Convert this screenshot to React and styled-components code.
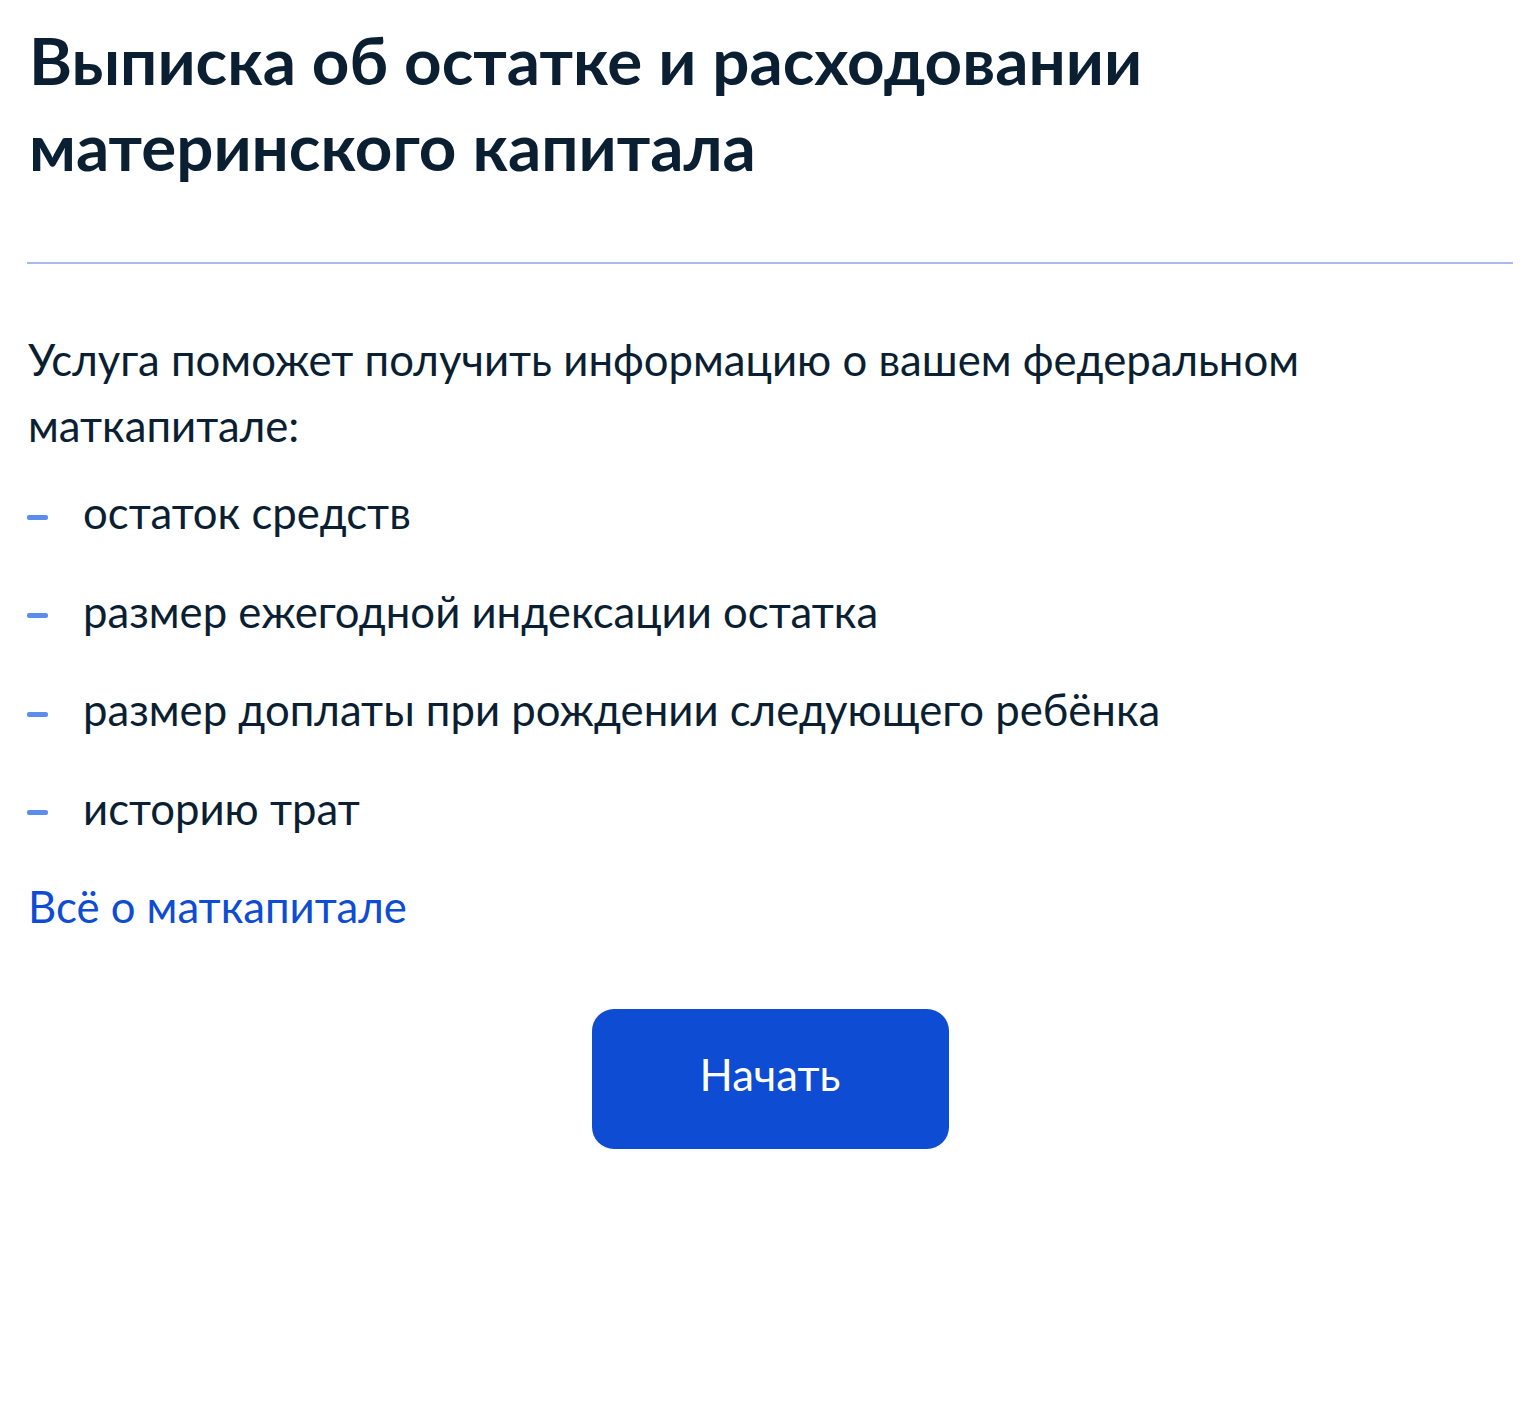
import React from "react";
import styled, { createGlobalStyle } from "styled-components";

const GlobalStyle = createGlobalStyle`
  body {
    margin: 0;
    background: #fff;
    font-family: Lato, "Noto Sans", sans-serif;
    color: #0b1f33;
  }
`;

const Page = styled.main`
  padding: 17px 27px 0 27px;
  display: flex;
  flex-direction: column;
`;

const Title = styled.h1`
  margin: 0 0 0 2px;
  font-size: 65.5px;
  line-height: 86px;
  font-weight: 700;
  color: #0b1f33;
`;

const Divider = styled.hr`
  margin: 73px 0 0 0;
  border: none;
  height: 2px;
  background: #a5bbf0;
`;

const Lead = styled.p`
  margin: 62px 0 0 1px;
  font-size: 43.7px;
  line-height: 66px;
  max-width: 1300px;
`;

const List = styled.ul`
  list-style: none;
  margin: 21px 0 0 0;
  padding: 0;
  display: flex;
  flex-direction: column;
  gap: 32.5px;
`;

const Item = styled.li`
  display: flex;
  align-items: center;
  font-size: 43.7px;
  line-height: 66px;

  &::before {
    content: "";
    flex: none;
    width: 21px;
    height: 5px;
    border-radius: 2px;
    background: #5b8def;
    margin: 10px 35px 0 0;
  }
`;

const MoreLink = styled.a`
  margin: 32px 0 0 1px;
  font-size: 43.7px;
  line-height: 66px;
  color: #0d4cd3;
  text-decoration: none;
  align-self: flex-start;
`;

const Actions = styled.div`
  display: flex;
  justify-content: center;
  margin-top: 70px;
`;

const StartButton = styled.button`
  width: 357px;
  height: 140px;
  padding: 0 0 9px 0;
  border: none;
  border-radius: 22px;
  background: #0d4cd3;
  color: #fff;
  font-family: Lato, "Noto Sans", sans-serif;
  font-size: 43.7px;
  cursor: pointer;
`;

const items = [
  "остаток средств",
  "размер ежегодной индексации остатка",
  "размер доплаты при рождении следующего ребёнка",
  "историю трат",
];

export default function App() {
  return (
    <>
      <GlobalStyle />
      <Page>
        <Title>
          Выписка об остатке и расходовании
          <br />
          материнского капитала
        </Title>
        <Divider />
        <Lead>
          Услуга поможет получить информацию о вашем федеральном маткапитале:
        </Lead>
        <List>
          {items.map((text) => (
            <Item key={text}>{text}</Item>
          ))}
        </List>
        <MoreLink href="#">Всё о маткапитале</MoreLink>
        <Actions>
          <StartButton type="button">Начать</StartButton>
        </Actions>
      </Page>
    </>
  );
}
